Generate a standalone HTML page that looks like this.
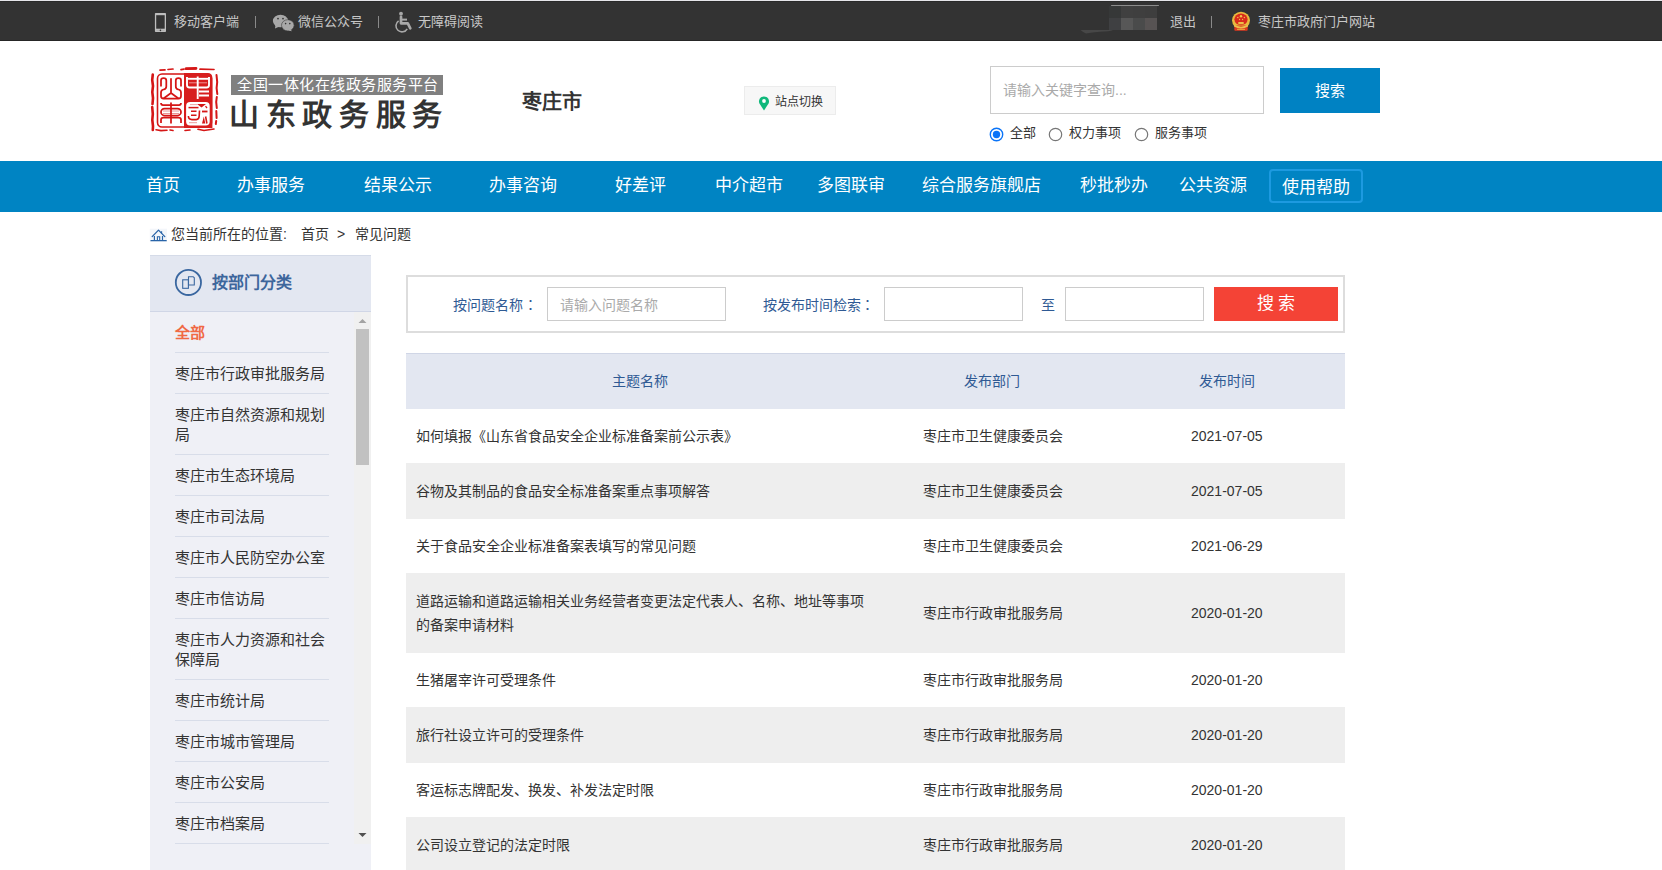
<!DOCTYPE html>
<html lang="zh-CN">
<head>
<meta charset="utf-8">
<title>常见问题</title>
<style>
*{margin:0;padding:0;box-sizing:border-box}
html,body{width:1662px;height:870px;overflow:hidden;background:#fff}
body{font-family:"Liberation Sans",sans-serif;color:#333;position:relative}
.a{position:absolute;white-space:nowrap}
/* top bar */
#topline{position:absolute;left:0;top:0;width:1662px;height:1px;background:#e6e6ea}
#top{position:absolute;left:0;top:1px;width:1662px;height:40px;background:#333;border-top:1px solid #2a2a2a;border-bottom:1px solid #262626}
.tt{font-size:13px;line-height:13px;color:#c8c8c8}
.sep{position:absolute;width:1px;height:12px;background:#8a8a8a}
/* header */
.banner{position:absolute;left:231px;top:75px;width:212px;height:20px;background:#808080}
/* nav */
#nav{position:absolute;left:0;top:161px;width:1662px;height:51px;background:#0084c3}
.nv{font-size:17px;line-height:17px;color:#fff}
#help{position:absolute;left:1269px;top:169px;width:94px;height:34px;border:2px solid #1d9ae0;border-radius:4px}
/* breadcrumb */
.bc{font-size:14px;line-height:14px;color:#333}
/* sidebar */
#side{position:absolute;left:150px;top:255px;width:221px;height:615px;background:#eff0f6}
#sidehd{position:absolute;left:0;top:0;width:221px;height:57px;background:#e3e7f1;border-top:1px solid #d5dbe8;border-bottom:1px solid #d0d6e6}
.si{position:absolute;left:25px;width:154px;font-size:15px;line-height:20px;color:#333;white-space:normal}
.sl{position:absolute;left:25px;width:154px;height:1px;background:#d8dde9}
#track{position:absolute;left:204px;top:57px;width:17px;height:532px;background:#f0f0f0}
#thumb{position:absolute;left:206px;top:74px;width:13px;height:136px;background:#c1c1c1}
/* filter */
#filter{position:absolute;left:406px;top:275px;width:939px;height:58px;border:2px solid #ddd;background:#fff}
.lbl{font-size:14px;line-height:14px;color:#2f5a94}
.inp{position:absolute;top:287px;height:34px;border:1px solid #ccc;background:#fff}
.ph{font-size:14px;line-height:14px;color:#aaa}
#sbtn{position:absolute;left:1214px;top:287px;width:124px;height:34px;background:#f44336}
/* table */
#thead{position:absolute;left:406px;top:353px;width:939px;height:55.5px;background:#e3e7f1;border-top:1px solid #d0d6e6}
.th{font-size:14px;line-height:14px;color:#2f5a94}
.row{position:absolute;left:406px;width:939px}
.g{background:#eeeeee}
.td{font-size:14px;line-height:14px;color:#333}
</style>
</head>
<body>
<div id="topline"></div>
<div id="top"></div>

<!-- top bar items -->
<svg class="a" style="left:150px;top:10px" width="22" height="26" viewBox="0 0 22 26">
  <rect x="4.9" y="3" width="11.1" height="19" rx="0.8" fill="#bdbdbd"/>
  <rect x="6.2" y="5.2" width="8.5" height="13.5" fill="#333"/>
  <path d="M6.5 20.4 H9.3 M11.6 20.4 H14.4" stroke="#a0a0a0" stroke-width="0.5"/>
  <circle cx="10.45" cy="20.4" r="0.8" fill="#333"/>
</svg>
<div class="a tt" style="left:174px;top:14.5px">移动客户端</div>
<div class="sep" style="left:255px;top:16px"></div>
<svg class="a" style="left:272px;top:14px" width="23" height="18" viewBox="0 0 23 18">
  <ellipse cx="8.5" cy="7" rx="7.6" ry="6.3" fill="#a8a8a8"/>
  <path d="M3.5 11 L3 14.5 L7.5 12.5 Z" fill="#a8a8a8"/>
  <ellipse cx="15.8" cy="11.3" rx="6.3" ry="5.6" fill="#a8a8a8" stroke="#3a3a3a" stroke-width="0.6"/>
  <path d="M18.5 15.5 L20 17.3 L16 16.5 Z" fill="#a8a8a8"/>
  <circle cx="6" cy="4.6" r="0.9" fill="#333"/><circle cx="11" cy="4.6" r="0.9" fill="#333"/>
  <circle cx="13.6" cy="9.6" r="0.8" fill="#333"/><circle cx="17.8" cy="9.6" r="0.8" fill="#333"/>
</svg>
<div class="a tt" style="left:298px;top:14.5px">微信公众号</div>
<div class="sep" style="left:378px;top:16px"></div>
<svg class="a" style="left:390px;top:8px" width="30" height="30" viewBox="0 0 30 30">
  <circle cx="11" cy="5.7" r="1.9" fill="#a8a8a8"/>
  <path d="M11 8.8 V15.3 H17.8 L20.3 20.3" fill="none" stroke="#a8a8a8" stroke-width="2.7" stroke-linejoin="round" stroke-linecap="round"/>
  <path d="M11 11.6 H17" fill="none" stroke="#a8a8a8" stroke-width="2"/>
  <path d="M8.6 12.9 A6 6 0 1 0 17.2 20.8" fill="none" stroke="#a8a8a8" stroke-width="1.6"/>
</svg>
<div class="a tt" style="left:418px;top:14.5px">无障碍阅读</div>

<!-- blurred user name -->
<div class="a" style="left:1111px;top:5px;width:48px;height:1px;background:#8c8c8c;border-radius:1px"></div>
<div class="a" style="left:1109px;top:6px;width:12px;height:12px;background:#363838"></div>
<div class="a" style="left:1121px;top:6px;width:12px;height:12px;background:#404040"></div>
<div class="a" style="left:1133px;top:6px;width:12px;height:12px;background:#3f3f3f"></div>
<div class="a" style="left:1145px;top:6px;width:12px;height:12px;background:#3e3e3e"></div>
<div class="a" style="left:1109px;top:18px;width:12px;height:12px;background:#3f4042"></div>
<div class="a" style="left:1121px;top:18px;width:12px;height:12px;background:#575757"></div>
<div class="a" style="left:1133px;top:18px;width:12px;height:12px;background:#4a4b4b"></div>
<div class="a" style="left:1145px;top:18px;width:12px;height:12px;background:#575353"></div>
<svg class="a" style="left:1080px;top:29px" width="34" height="6" viewBox="0 0 34 6"><path d="M0.5 1 L33 1 Q30 2.5 20 2.8 Q12 3.2 6 4.5 Q3 3 0.5 1 Z" fill="#474747"/></svg>
<div class="a tt" style="left:1170px;top:14.5px">退出</div>
<div class="sep" style="left:1211px;top:16px"></div>
<svg class="a" style="left:1226px;top:6px" width="30" height="30" viewBox="0 0 30 30">
  <ellipse cx="15" cy="14.3" rx="9" ry="8.6" fill="#e9b83e"/>
  <ellipse cx="15" cy="13.3" rx="6.6" ry="5.9" fill="#d92a1c"/>
  <circle cx="15" cy="10.3" r="1.2" fill="#f1c94a"/>
  <circle cx="11.8" cy="11.6" r="0.75" fill="#eec04a"/><circle cx="18.4" cy="11.6" r="0.75" fill="#eec04a"/>
  <circle cx="13.6" cy="13.5" r="0.65" fill="#eec04a"/><circle cx="16.6" cy="13.5" r="0.65" fill="#eec04a"/>
  <rect x="12.3" y="16" width="5.4" height="2.3" fill="#ecbf48"/>
  <rect x="8.3" y="19.5" width="13.4" height="5.3" rx="1" fill="#dd3a20"/>
  <rect x="11" y="22.8" width="8" height="1" fill="#e9b040"/>
  <path d="M8 18.6 Q15 22.8 22 18.6 L22 20.4 Q15 24.4 8 20.4 Z" fill="#ecc04c"/>
</svg>
<div class="a tt" style="left:1258px;top:14.5px">枣庄市政府门户网站</div>

<!-- logo seal -->
<svg class="a" style="left:148px;top:64px" width="74" height="73" viewBox="0 0 74 73">
  <g fill="none" stroke="#d51616" stroke-linecap="round">
    <path d="M12 6.2 L17 5.8 M20 5.5 L25 5 M33 5.6 L36 5.2 M38 5 L48 4.6 M52 5.2 L66 5.5" stroke-width="1.7"/>
    <path d="M38 4.6 L48 4.3" stroke-width="2.8"/>
    <path d="M4.8 10.5 L4.2 16 L5 22 L4.3 28 L5 34 L4.5 40 M4.2 43 L4.8 50 L4.3 56 L5 62 L4.8 66" stroke-width="2.6"/>
    <path d="M68.5 11 L69.2 18 L68.6 24 L69.3 30 M68.8 33 L68.2 38 L68.8 44 M68.3 47 L68.6 54 M68.2 57 L67.8 60" stroke-width="2"/>
    <path d="M8 65.8 L13 66.6 L19 66.3 M22 66 L25 66.5 M37 66.5 L42 66 M50 65.3 L56 66.5 L66 65" stroke-width="1.6"/>
    <rect x="9.5" y="10" width="54" height="53" rx="4.5" stroke-width="1.6"/>
  </g>
  <path d="M36 9.1 L59.5 9.1 Q64.4 9.1 64.4 14 L64.4 63.9 L36 63.9 Z" fill="#d71d1d"/>
  <!-- 山 -->
  <g stroke="#d51616" stroke-width="1.75" fill="none" stroke-linejoin="round">
    <path d="M13,22.5 V16.5 Q13,14.2 15.5,14.2 Q18.3,14.2 18.3,16.5 V22.5 Q18.3,25 15.5,25.5 Q13,26 13,28.5 V32 Q13,34.5 15.5,34.5 H30.5 Q33,34.5 33,32 V28.5 Q33,26 30.5,25.5 Q27.8,25 27.8,22.5 V16.5 Q27.8,14.2 30.5,14.2 Q33,14.2 33,16.5 V22.5"/>
    <path d="M23,14.3 V29 L15.5,34.5 M23,29 L30.5,34.5"/>
  </g>
  <!-- 東 -->
  <g stroke="#d51616" stroke-width="1.75" fill="none" stroke-linejoin="round">
    <path d="M13,39 Q13,41 15,41 H31 Q33,41 33,39"/>
    <rect x="13" y="44.5" width="20" height="7" rx="3.5"/>
    <path d="M15,47 H31 M15,49.5 H31" stroke-width="0.9" stroke="#e58a8a"/>
    <path d="M13,59 V55.8 Q13,53.5 15.5,53.5 H30.5 Q33,53.5 33,55.8 V59"/>
    <path d="M23,38.5 V59.5"/>
  </g>
  <!-- 中 -->
  <g stroke="#fff" stroke-width="1.9" fill="none" stroke-linejoin="round">
    <path d="M39,13 V21 Q39,23.5 41.5,23.5 H58.5 Q61,23.5 61,21 V13"/>
    <path d="M39.5,14.8 H60.5"/>
    <path d="M41,18.8 H59" stroke-width="0.9" stroke="#f0a0a0"/>
    <path d="M49.7,12.5 V35"/>
    <path d="M51,27.5 H61 M51,31.5 H61"/>
  </g>
  <!-- 國 -->
  <rect x="38.1" y="38.1" width="23.6" height="23.4" rx="4" fill="#fff"/>
  <g stroke="#d51616" fill="none">
    <path d="M42 40.6 H49" stroke-width="0.9" stroke="#ec9a9a"/>
    <path d="M40.5 43.6 H50.5" stroke-width="1.5"/>
    <path d="M43 47.3 H48.5 M43 51.3 H48.5" stroke-width="1.6"/>
    <path d="M40.4 52 Q40.4 55.6 44 55.6 H48.3 Q51 55.6 51.2 52 L51.5 46.5" stroke-width="1.6"/>
    <path d="M54 47.5 H59.5" stroke-width="1.8"/>
    <path d="M57.6 52.5 L58.9 59.5" stroke-width="1.6"/>
    <path d="M57.5 42.2 L59 44" stroke-width="1.3"/>
    <path d="M41 58.7 H49" stroke-width="1" stroke="#ec9a9a"/>
  </g>
  <path d="M49 40 L58 40 L53.5 43.6 Z M54 59.5 L55.8 52.5 L57.3 59.5 Z" fill="#d51616"/>
</svg>
<div class="banner"></div>
<div class="a" style="left:237px;top:77px;font-size:15px;line-height:15px;color:#fff;letter-spacing:0.5px">全国一体化在线政务服务平台</div>
<div class="a" style="left:229px;top:98px;font-size:30px;line-height:34px;font-weight:bold;color:#333;letter-spacing:6.7px">山东政务服务</div>

<div class="a" style="left:522px;top:91px;font-size:20px;line-height:22px;font-weight:bold;color:#333">枣庄市</div>

<div class="a" style="left:744px;top:86px;width:92px;height:29px;background:#f7f7f7;border:1px solid #ececec"></div>
<svg class="a" style="left:758px;top:95px" width="12" height="16" viewBox="0 0 12 16">
  <path d="M6 15.5 L1.6 8.8 A5 5 0 1 1 10.4 8.8 Z" fill="#10b87b"/>
  <circle cx="6" cy="6" r="1.9" fill="#fff"/>
</svg>
<div class="a" style="left:775px;top:96px;font-size:12px;line-height:12px;color:#333">站点切换</div>

<div class="a" style="left:990px;top:66px;width:274px;height:48px;border:1px solid #ccc"></div>
<div class="a" style="left:1003px;top:83px;font-size:14px;line-height:14px;color:#aaa">请输入关键字查询...</div>
<div class="a" style="left:1280px;top:68px;width:100px;height:45px;background:#0082c3"></div>
<div class="a" style="left:1315px;top:83px;font-size:15px;line-height:15px;color:#fff">搜索</div>

<svg class="a" style="left:989px;top:127px" width="15" height="15" viewBox="0 0 15 15">
  <circle cx="7.5" cy="7.5" r="6.2" fill="#fff" stroke="#0a74f8" stroke-width="1.4"/>
  <circle cx="7.5" cy="7.5" r="3.7" fill="#0a74f8"/>
</svg>
<div class="a" style="left:1010px;top:126px;font-size:13px;line-height:13px;color:#333">全部</div>
<svg class="a" style="left:1048px;top:127px" width="15" height="15" viewBox="0 0 15 15">
  <circle cx="7.5" cy="7.5" r="6.2" fill="#fff" stroke="#767676" stroke-width="1.2"/>
</svg>
<div class="a" style="left:1069px;top:126px;font-size:13px;line-height:13px;color:#333">权力事项</div>
<svg class="a" style="left:1134px;top:127px" width="15" height="15" viewBox="0 0 15 15">
  <circle cx="7.5" cy="7.5" r="6.2" fill="#fff" stroke="#767676" stroke-width="1.2"/>
</svg>
<div class="a" style="left:1155px;top:126px;font-size:13px;line-height:13px;color:#333">服务事项</div>

<!-- nav -->
<div id="nav"></div>
<div class="a nv" style="left:146px;top:177px">首页</div>
<div class="a nv" style="left:237px;top:177px">办事服务</div>
<div class="a nv" style="left:364px;top:177px">结果公示</div>
<div class="a nv" style="left:489px;top:177px">办事咨询</div>
<div class="a nv" style="left:615px;top:177px">好差评</div>
<div class="a nv" style="left:715px;top:177px">中介超市</div>
<div class="a nv" style="left:817px;top:177px">多图联审</div>
<div class="a nv" style="left:922px;top:177px">综合服务旗舰店</div>
<div class="a nv" style="left:1080px;top:177px">秒批秒办</div>
<div class="a nv" style="left:1179px;top:177px">公共资源</div>
<div id="help"></div>
<div class="a nv" style="left:1282px;top:179px">使用帮助</div>

<!-- breadcrumb -->
<svg class="a" style="left:146px;top:224px" width="24" height="22" viewBox="0 0 24 22">
  <rect x="3.8" y="4.7" width="17.2" height="13" fill="#f3f6fa"/>
  <path d="M6.2 12.6 L12.5 6.1 L18.8 12.6" fill="none" stroke="#2864a8" stroke-width="1.3" stroke-linejoin="round" stroke-linecap="round"/>
  <path d="M15.6 7.3 V9.6" stroke="#2864a8" stroke-width="1.1"/>
  <path d="M8.4 12 V16.5 M16.5 12 V16.5" stroke="#2864a8" stroke-width="1.2"/>
  <path d="M11.4 16.5 V12.7 H13.7 V16.5" fill="none" stroke="#2864a8" stroke-width="1.1"/>
  <path d="M5 16.7 H20.2" stroke="#2864a8" stroke-width="1.3" stroke-linecap="round"/>
</svg>
<div class="a bc" style="left:171px;top:227px">您当前所在的位置:</div>
<div class="a bc" style="left:301px;top:227px">首页</div>
<div class="a bc" style="left:337px;top:227px">&gt;</div>
<div class="a bc" style="left:355px;top:227px">常见问题</div>

<!-- sidebar -->
<div id="side">
  <div id="sidehd"></div>
  <svg class="a" style="left:24px;top:13px" width="29" height="29" viewBox="0 0 29 29">
    <circle cx="14.4" cy="14.4" r="12.6" fill="none" stroke="#3a67a0" stroke-width="1.8"/>
    <rect x="8.7" y="11.8" width="5.7" height="8.5" fill="none" stroke="#3a67a0" stroke-width="1.1"/>
    <path d="M14.5 17 V8.7 H19.2 L20.3 9.8 V17 Z" fill="#e3e7f1" stroke="#3a67a0" stroke-width="1.1"/>
  </svg>
  <div class="a" style="left:62px;top:19px;font-size:16px;line-height:18px;color:#3d669c;font-weight:bold">按部门分类</div>

  <div id="track"></div>
  <svg class="a" style="left:208px;top:63px" width="9" height="6" viewBox="0 0 9 6"><path d="M0.5 5 L4.5 1 L8.5 5 Z" fill="#a3a3a3"/></svg>
  <div id="thumb"></div>
  <svg class="a" style="left:208px;top:577px" width="9" height="6" viewBox="0 0 9 6"><path d="M0.5 1 L4.5 5 L8.5 1 Z" fill="#505050"/></svg>

  <div class="si" style="top:68px;color:#f06944;font-weight:bold">全部</div>
  <div class="sl" style="top:97px"></div>
  <div class="si" style="top:109px">枣庄市行政审批服务局</div>
  <div class="sl" style="top:138px"></div>
  <div class="si" style="top:150px">枣庄市自然资源和规划局</div>
  <div class="sl" style="top:199px"></div>
  <div class="si" style="top:211px">枣庄市生态环境局</div>
  <div class="sl" style="top:240px"></div>
  <div class="si" style="top:252px">枣庄市司法局</div>
  <div class="sl" style="top:281px"></div>
  <div class="si" style="top:293px">枣庄市人民防空办公室</div>
  <div class="sl" style="top:322px"></div>
  <div class="si" style="top:334px">枣庄市信访局</div>
  <div class="sl" style="top:363px"></div>
  <div class="si" style="top:375px">枣庄市人力资源和社会保障局</div>
  <div class="sl" style="top:424px"></div>
  <div class="si" style="top:436px">枣庄市统计局</div>
  <div class="sl" style="top:465px"></div>
  <div class="si" style="top:477px">枣庄市城市管理局</div>
  <div class="sl" style="top:506px"></div>
  <div class="si" style="top:518px">枣庄市公安局</div>
  <div class="sl" style="top:547px"></div>
  <div class="si" style="top:559px">枣庄市档案局</div>
  <div class="sl" style="top:588px"></div>
</div>

<!-- filter -->
<div id="filter"></div>
<div class="a lbl" style="left:453px;top:298px">按问题名称</div><div class="a lbl" style="left:527px;top:297px">：</div>
<div class="inp" style="left:547px;width:179px"></div>
<div class="a ph" style="left:560px;top:298px">请输入问题名称</div>
<div class="a lbl" style="left:763px;top:298px">按发布时间检索</div><div class="a lbl" style="left:864px;top:297px">：</div>
<div class="inp" style="left:884px;width:139px"></div>
<div class="a lbl" style="left:1041px;top:298px">至</div>
<div class="inp" style="left:1065px;width:139px"></div>
<div id="sbtn"></div>
<div class="a" style="left:1257px;top:295px;font-size:17px;line-height:17px;color:#fff;letter-spacing:4px">搜索</div>

<!-- table -->
<div id="thead"></div>
<div class="a th" style="left:612px;top:374px">主题名称</div>
<div class="a th" style="left:964px;top:374px">发布部门</div>
<div class="a th" style="left:1199px;top:374px">发布时间</div>

<div class="row g" style="top:463px;height:56px"></div>
<div class="row g" style="top:573px;height:80px"></div>
<div class="row g" style="top:707px;height:56px"></div>
<div class="row g" style="top:817px;height:60px"></div>

<div class="a td" style="left:416px;top:429px">如何填报《山东省食品安全企业标准备案前公示表》</div>
<div class="a td" style="left:923px;top:429px">枣庄市卫生健康委员会</div>
<div class="a td" style="left:1191px;top:429px">2021-07-05</div>

<div class="a td" style="left:416px;top:484px">谷物及其制品的食品安全标准备案重点事项解答</div>
<div class="a td" style="left:923px;top:484px">枣庄市卫生健康委员会</div>
<div class="a td" style="left:1191px;top:484px">2021-07-05</div>

<div class="a td" style="left:416px;top:539px">关于食品安全企业标准备案表填写的常见问题</div>
<div class="a td" style="left:923px;top:539px">枣庄市卫生健康委员会</div>
<div class="a td" style="left:1191px;top:539px">2021-06-29</div>

<div class="a td" style="left:416px;top:594px">道路运输和道路运输相关业务经营者变更法定代表人、名称、地址等事项</div>
<div class="a td" style="left:416px;top:618px">的备案申请材料</div>
<div class="a td" style="left:923px;top:606px">枣庄市行政审批服务局</div>
<div class="a td" style="left:1191px;top:606px">2020-01-20</div>

<div class="a td" style="left:416px;top:673px">生猪屠宰许可受理条件</div>
<div class="a td" style="left:923px;top:673px">枣庄市行政审批服务局</div>
<div class="a td" style="left:1191px;top:673px">2020-01-20</div>

<div class="a td" style="left:416px;top:728px">旅行社设立许可的受理条件</div>
<div class="a td" style="left:923px;top:728px">枣庄市行政审批服务局</div>
<div class="a td" style="left:1191px;top:728px">2020-01-20</div>

<div class="a td" style="left:416px;top:783px">客运标志牌配发、换发、补发法定时限</div>
<div class="a td" style="left:923px;top:783px">枣庄市行政审批服务局</div>
<div class="a td" style="left:1191px;top:783px">2020-01-20</div>

<div class="a td" style="left:416px;top:838px">公司设立登记的法定时限</div>
<div class="a td" style="left:923px;top:838px">枣庄市行政审批服务局</div>
<div class="a td" style="left:1191px;top:838px">2020-01-20</div>

</body>
</html>
